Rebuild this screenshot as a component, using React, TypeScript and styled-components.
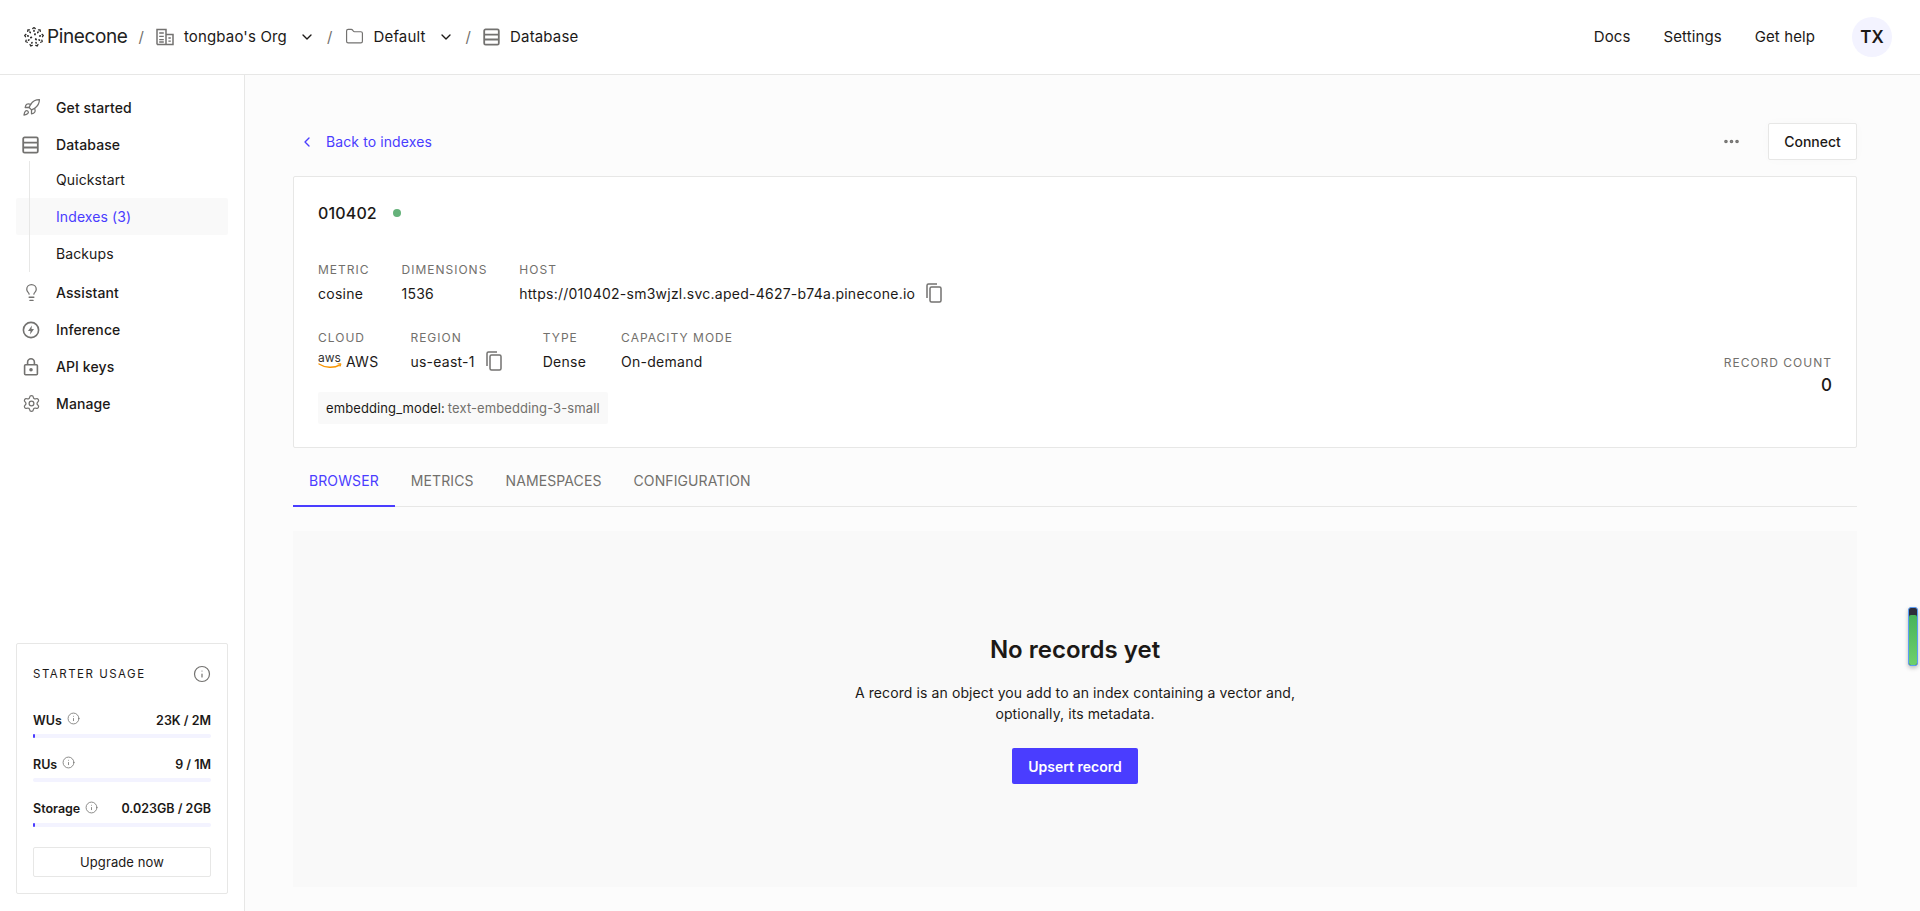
import React from 'react'
import styled, { createGlobalStyle } from 'styled-components'
import { ChevronDown, ChevronLeft, Ellipsis, Folder, Info, Lightbulb, Rocket, Settings } from 'lucide-react'

const palette = {
	text: '#1c1917',
	label: '#72706c',
	icon: '#737270',
	accent: '#4a3dff',
	border: '#e7e7e6',
	page: '#fcfcfc',
	soft: '#f9f9f9',
	track: '#f3f3ff',
}

const GlobalStyle = createGlobalStyle`
	html, body {
		margin: 0;
		height: 100%;
		background: ${palette.page};
		font-family: Inter, 'Liberation Sans', sans-serif;
		color: ${palette.text};
		overflow: hidden;
	}
	* { box-sizing: border-box; }
`

const RowsIcon = () => (
	<svg width="17" height="18" viewBox="0 0 17 18" fill="none" stroke="currentColor" strokeWidth="1.8">
		<rect x="1.2" y="1.4" width="14.6" height="15.2" rx="1.4" />
		<path d="M1.2 6.7h14.6M1.2 11.5h14.6" />
	</svg>
)

const OrgIcon = () => (
	<svg width="18" height="18" viewBox="0 0 18 18" fill="none" stroke="currentColor" strokeWidth="1.5">
		<path d="M1 16.4V1.6h9v14.8M10 6.6h7v9.8H1" />
		<path d="M3.2 5h4.6M3.2 8.4h4.6M3.2 11.6h4.6M3.2 14h4.6M12.4 10h2.4M12.4 13.2h2.4" strokeWidth="1.3" />
	</svg>
)

const CopyIcon = () => (
	<svg width="18" height="20" viewBox="0 0 18 20" fill="none" stroke="currentColor" strokeWidth="1.5">
		<path d="M2 15V2.5C2 1.7 2.5 1 3.5 1H12" />
		<rect x="5" y="4" width="11" height="15" rx="1.5" />
	</svg>
)

const BoltIcon = () => (
	<svg width="18" height="18" viewBox="0 0 18 18" fill="none">
		<circle cx="9" cy="9" r="7.6" stroke="currentColor" strokeWidth="1.6" />
		<path d="M9.9 4.4 6 9.9h2.5l-.4 3.7 3.9-5.5H9.5z" fill="currentColor" />
	</svg>
)

const LockIcon = () => (
	<svg width="18" height="18" viewBox="0 0 18 18" fill="none" stroke="currentColor" strokeWidth="1.6">
		<rect x="2.6" y="6.8" width="12.8" height="10" rx="1" />
		<path d="M5.6 6.8V4.2a3.4 3.4 0 0 1 6.8 0v2.6" />
		<circle cx="9" cy="11.8" r="1" fill="currentColor" />
	</svg>
)

const logoOuter = [0, 40, 80, 120, 160, 200, 240, 280, 320]
const logoInner = [20, 140, 260]

const LogoMark = () => (
	<svg width="20" height="20" viewBox="-10 -10 20 20" fill="none" stroke="#2b2a28" strokeLinecap="round">
		{logoOuter.map((deg) => (
			<g key={deg} transform={`rotate(${deg})`}>
				<path d="M-1.2 -8.4 0 -9.4 1.2 -8.4" strokeWidth="1.3" />
				<path d="M0 -6.4v.6" strokeWidth="1.6" />
			</g>
		))}
		{logoInner.map((deg) => (
			<path key={deg} d="M0 -3.2v.5" strokeWidth="1.8" transform={`rotate(${deg})`} />
		))}
	</svg>
)

const AwsIcon = () => (
	<AwsWrap>
		<AwsText>aws</AwsText>
		<svg width="24" height="6" viewBox="0 0 24 6" fill="none">
			<path d="M1 1c6 4 15 4.4 21 .8" stroke="#f79400" strokeWidth="1.4" strokeLinecap="round" />
			<path d="M19.5 .8 23 .8 22 3.6" stroke="#f79400" strokeWidth="1" />
		</svg>
	</AwsWrap>
)

const usage = [
	{ name: 'WUs', value: '23K / 2M', fill: 1 },
	{ name: 'RUs', value: '9 / 1M', fill: 0 },
	{ name: 'Storage', value: '0.023GB / 2GB', fill: 1 },
]

const App = () => {
	return (
		<Page>
			<GlobalStyle />
			<Header>
				<Crumbs>
					<Logo>
						<LogoMark />
						<LogoName>Pinecone</LogoName>
					</Logo>
					<Slash>/</Slash>
					<Crumb>
						<CrumbIcon>
							<OrgIcon />
						</CrumbIcon>
						tongbao's Org
						<CrumbChevron>
							<ChevronDown size={16} strokeWidth={2} />
						</CrumbChevron>
					</Crumb>
					<Slash>/</Slash>
					<Crumb>
						<CrumbIcon>
							<Folder size={19} strokeWidth={1.5} />
						</CrumbIcon>
						Default
						<CrumbChevron>
							<ChevronDown size={16} strokeWidth={2} />
						</CrumbChevron>
					</Crumb>
					<Slash>/</Slash>
					<Crumb>
						<CrumbIcon>
							<RowsIcon />
						</CrumbIcon>
						Database
					</Crumb>
				</Crumbs>
				<TopNav>
					<TopLink>Docs</TopLink>
					<TopLink>Settings</TopLink>
					<TopLink>Get help</TopLink>
					<Avatar>TX</Avatar>
				</TopNav>
			</Header>
			<Body>
				<Sidebar>
					<Nav>
						<NavItem>
							<NavIcon>
								<Rocket size={19} strokeWidth={1.6} />
							</NavIcon>
							Get started
						</NavItem>
						<NavItem>
							<NavIcon>
								<RowsIcon />
							</NavIcon>
							Database
						</NavItem>
						<SubNav>
							<SubItem>Quickstart</SubItem>
							<SubItem $active>Indexes (3)</SubItem>
							<SubItem>Backups</SubItem>
						</SubNav>
						<NavItem>
							<NavIcon>
								<Lightbulb size={19} strokeWidth={1.6} />
							</NavIcon>
							Assistant
						</NavItem>
						<NavItem>
							<NavIcon>
								<BoltIcon />
							</NavIcon>
							Inference
						</NavItem>
						<NavItem>
							<NavIcon>
								<LockIcon />
							</NavIcon>
							API keys
						</NavItem>
						<NavItem>
							<NavIcon>
								<Settings size={19} strokeWidth={1.6} />
							</NavIcon>
							Manage
						</NavItem>
					</Nav>
					<UsageCard>
						<UsageHead>
							<UsageTitle>STARTER USAGE</UsageTitle>
							<Info size={18} strokeWidth={1.6} color={palette.icon} />
						</UsageHead>
						{usage.map((item) => (
							<UsageRow key={item.name}>
								<UsageLine>
									<UsageName>
										{item.name}
										<Info size={13} strokeWidth={1.5} color={palette.icon} />
									</UsageName>
									<span>{item.value}</span>
								</UsageLine>
								<Track>
									<Fill style={{ width: `${item.fill * 2}px` }} />
								</Track>
							</UsageRow>
						))}
						<UpgradeButton>Upgrade now</UpgradeButton>
					</UsageCard>
				</Sidebar>
				<Main>
					<TopRow>
						<BackLink>
							<ChevronLeft size={16} strokeWidth={2} />
							Back to indexes
						</BackLink>
						<Actions>
							<Ellipsis size={19} strokeWidth={2.6} color={palette.icon} />
							<ConnectButton>Connect</ConnectButton>
						</Actions>
					</TopRow>
					<IndexCard>
						<IndexInfo>
							<IndexTitle>
								010402
								<StatusDot />
							</IndexTitle>
							<FieldRow $top={38}>
								<Field>
									<FieldLabel>METRIC</FieldLabel>
									<FieldValue>cosine</FieldValue>
								</Field>
								<Field>
									<FieldLabel>DIMENSIONS</FieldLabel>
									<FieldValue>1536</FieldValue>
								</Field>
								<Field>
									<FieldLabel>HOST</FieldLabel>
									<FieldValue>
										https://010402-sm3wjzl.svc.aped-4627-b74a.pinecone.io
										<CopyWrap>
											<CopyIcon />
										</CopyWrap>
									</FieldValue>
								</Field>
							</FieldRow>
							<FieldRow $top={27}>
								<Field>
									<FieldLabel>CLOUD</FieldLabel>
									<FieldValue>
										<AwsIcon />
										AWS
									</FieldValue>
								</Field>
								<Field $trail={8}>
									<FieldLabel>REGION</FieldLabel>
									<FieldValue>
										us-east-1
										<CopyWrap>
											<CopyIcon />
										</CopyWrap>
									</FieldValue>
								</Field>
								<Field $trail={3}>
									<FieldLabel>TYPE</FieldLabel>
									<FieldValue>Dense</FieldValue>
								</Field>
								<Field>
									<FieldLabel>CAPACITY MODE</FieldLabel>
									<FieldValue>On-demand</FieldValue>
								</Field>
							</FieldRow>
							<Chip>
								embedding_model: <ChipValue>text-embedding-3-small</ChipValue>
							</Chip>
						</IndexInfo>
						<RecordCount>
							<FieldLabel>RECORD COUNT</FieldLabel>
							<CountValue>0</CountValue>
						</RecordCount>
					</IndexCard>
					<Tabs>
						<Tab $active>BROWSER</Tab>
						<Tab>METRICS</Tab>
						<Tab>NAMESPACES</Tab>
						<Tab>CONFIGURATION</Tab>
					</Tabs>
					<EmptyPanel>
						<EmptyTitle>No records yet</EmptyTitle>
						<EmptyText>A record is an object you add to an index containing a vector and, optionally, its metadata.</EmptyText>
						<PrimaryButton>Upsert record</PrimaryButton>
					</EmptyPanel>
				</Main>
			</Body>
			<SideWidget>
				<SideWidgetFill />
			</SideWidget>
		</Page>
	)
}

const Page = styled.div`
	width: 1920px;
	height: 911px;
	display: flex;
	flex-direction: column;
	position: relative;
`
const Header = styled.header`
	height: 75px;
	flex: none;
	display: flex;
	align-items: center;
	justify-content: space-between;
	padding: 0 28px 1px 24px;
	background: #fff;
	border-bottom: 1px solid ${palette.border};
`
const Crumbs = styled.div`
	display: flex;
	align-items: center;
	font-size: 15px;
	letter-spacing: 0.15px;
`
const Logo = styled.div`
	display: flex;
	align-items: center;
	gap: 3px;
`
const LogoName = styled.span`
	font-size: 19px;
	letter-spacing: -0.4px;
	color: #222;
`
const Slash = styled.span`
	margin: 0 12px 0 11px;
	color: ${palette.label};
	font-size: 15px;
`
const Crumb = styled.div`
	display: flex;
	align-items: center;
	gap: 10px;
`
const CrumbIcon = styled.span`
	display: flex;
	color: ${palette.icon};
`
const CrumbChevron = styled.span`
	display: flex;
	margin: 0 1px 0 2px;
`
const TopNav = styled.nav`
	display: flex;
	align-items: center;
	gap: 33px;
	font-size: 15px;
	letter-spacing: 0.1px;
`
const TopLink = styled.span``
const Avatar = styled.div`
	width: 40px;
	height: 40px;
	border-radius: 100%;
	background: ${palette.track};
	display: flex;
	align-items: center;
	justify-content: center;
	font-size: 17px;
	font-weight: 600;
	margin-left: 4px;
`
const Body = styled.div`
	flex: 1;
	display: flex;
	min-height: 0;
`
const Sidebar = styled.aside`
	width: 245px;
	flex: none;
	background: #fff;
	border-right: 1px solid ${palette.border};
	display: flex;
	flex-direction: column;
	justify-content: space-between;
	padding: 14px 16px 17px;
`
const Nav = styled.nav`
	display: flex;
	flex-direction: column;
`
const NavItem = styled.div`
	height: 37px;
	display: flex;
	align-items: center;
	gap: 15px;
	padding-left: 6px;
	font-size: 14px;
	font-weight: 500;
	letter-spacing: 0.1px;
`
const NavIcon = styled.span`
	display: flex;
	width: 19px;
	justify-content: flex-start;
	color: ${palette.icon};
`
const SubNav = styled.div`
	position: relative;
	margin: -2px 0 2px;
	display: flex;
	flex-direction: column;
	&::before {
		content: '';
		position: absolute;
		left: 13px;
		top: 0;
		bottom: 0;
		width: 1px;
		background: ${palette.border};
	}
`
const SubItem = styled.div<{ $active?: boolean }>`
	height: 37px;
	display: flex;
	align-items: center;
	padding-left: 40px;
	font-size: 14px;
	letter-spacing: 0.1px;
	border-radius: 2px;
	color: ${({ $active }) => ($active ? palette.accent : palette.text)};
	background: ${({ $active }) => ($active ? palette.soft : 'transparent')};
`
const UsageCard = styled.section`
	height: 251px;
	border: 1px solid ${palette.border};
	border-radius: 2px;
	padding: 21px 16px 16px;
	display: flex;
	flex-direction: column;
`
const UsageHead = styled.div`
	display: flex;
	align-items: center;
	justify-content: space-between;
	margin-bottom: 28px;
`
const UsageTitle = styled.span`
	font-size: 11.5px;
	letter-spacing: 1.5px;
`
const UsageRow = styled.div`
	height: 45px;
	display: flex;
	flex-direction: column;
`
const UsageLine = styled.div`
	display: flex;
	align-items: center;
	justify-content: space-between;
	height: 18px;
	font-size: 12.5px;
	font-weight: 600;
`
const UsageName = styled.span`
	display: flex;
	align-items: center;
	gap: 5px;
	& > svg {
		margin-top: -3px;
	}
`
const Track = styled.div`
	height: 4px;
	margin-top: 5px;
	border-radius: 2px;
	background: ${palette.track};
`
const Fill = styled.div`
	height: 4px;
	border-radius: 2px;
	background: ${palette.accent};
`
const UpgradeButton = styled.button`
	height: 30px;
	margin-top: 3px;
	background: #fff;
	border: 1px solid ${palette.border};
	border-radius: 2px;
	font: inherit;
	font-size: 13px;
	letter-spacing: 0.1px;
	color: ${palette.text};
`
const Main = styled.main`
	flex: 1;
	min-width: 0;
	padding: 48px 63px 0 48px;
	display: flex;
	flex-direction: column;
`
const TopRow = styled.div`
	height: 37px;
	margin-bottom: 16px;
	display: flex;
	align-items: center;
	justify-content: space-between;
`
const BackLink = styled.div`
	display: flex;
	align-items: center;
	gap: 11px;
	padding-left: 6px;
	font-size: 14px;
	letter-spacing: 0.1px;
	color: ${palette.accent};
`
const Actions = styled.div`
	display: flex;
	align-items: center;
	gap: 27px;
`
const ConnectButton = styled.button`
	width: 89px;
	height: 37px;
	background: #fff;
	border: 1px solid ${palette.border};
	border-radius: 2px;
	font: inherit;
	font-size: 14px;
	font-weight: 500;
	color: ${palette.text};
	box-shadow: 0 0 12px rgba(0, 0, 0, 0.02);
`
const IndexCard = styled.section`
	height: 272px;
	flex: none;
	background: #fff;
	border: 1px solid ${palette.border};
	border-radius: 2px;
	padding: 24px 24px 23px;
	display: flex;
	justify-content: space-between;
	align-items: flex-end;
`
const IndexInfo = styled.div`
	align-self: stretch;
	display: flex;
	flex-direction: column;
	align-items: flex-start;
`
const IndexTitle = styled.div`
	display: flex;
	align-items: center;
	gap: 16px;
	height: 24px;
	font-size: 16px;
	font-weight: 500;
	letter-spacing: 0.15px;
`
const StatusDot = styled.span`
	width: 8px;
	height: 8px;
	border-radius: 100%;
	background: #65b27a;
`
const FieldRow = styled.div<{ $top: number }>`
	display: flex;
	gap: 32px;
	margin-top: ${({ $top }) => $top}px;
`
const Field = styled.div<{ $trail?: number }>`
	display: flex;
	flex-direction: column;
	gap: 5px;
	padding-right: ${({ $trail }) => $trail ?? 0}px;
`
const FieldLabel = styled.span`
	font-size: 12px;
	line-height: 14px;
	letter-spacing: 1px;
	color: ${palette.label};
`
const FieldValue = styled.span`
	display: flex;
	align-items: center;
	height: 22px;
	font-size: 14px;
	letter-spacing: 0.25px;
	white-space: nowrap;
`
const CopyWrap = styled.span`
	display: flex;
	margin-left: 10px;
	color: ${palette.icon};
`
const AwsWrap = styled.span`
	display: flex;
	flex-direction: column;
	align-items: flex-start;
	margin-right: 4px;
	line-height: 1;
`
const AwsText = styled.span`
	font-size: 12px;
	line-height: 10px;
	letter-spacing: 0;
	color: #333;
`
const Chip = styled.div`
	margin-top: auto;
	height: 32px;
	padding: 0 8px;
	display: flex;
	align-items: center;
	gap: 3px;
	background: ${palette.soft};
	border-radius: 2px;
	font-size: 13px;
	letter-spacing: 0.1px;
`
const ChipValue = styled.span`
	color: ${palette.label};
`
const RecordCount = styled.div`
	display: flex;
	flex-direction: column;
	align-items: flex-end;
	gap: 3px;
	margin-bottom: 27px;
`
const CountValue = styled.span`
	font-size: 17px;
	font-weight: 500;
	line-height: 24px;
`
const Tabs = styled.div`
	height: 59px;
	flex: none;
	margin-bottom: 24px;
	display: flex;
	border-bottom: 1px solid ${palette.border};
`
const Tab = styled.div<{ $active?: boolean }>`
	height: 59px;
	padding: 8px 16px 0;
	display: flex;
	align-items: center;
	font-size: 14px;
	letter-spacing: 0.1px;
	color: ${({ $active }) => ($active ? palette.accent : palette.label)};
	border-bottom: 2px solid ${({ $active }) => ($active ? palette.accent : 'transparent')};
`
const EmptyPanel = styled.section`
	height: 356px;
	flex: none;
	background: ${palette.soft};
	display: flex;
	flex-direction: column;
	align-items: center;
	justify-content: center;
`
const EmptyTitle = styled.h2`
	margin: 0 0 16px;
	font-size: 24px;
	line-height: 32px;
	font-weight: 600;
`
const EmptyText = styled.p`
	margin: 0 0 24px;
	width: 460px;
	text-align: center;
	font-size: 14px;
	line-height: 21px;
	letter-spacing: 0.1px;
`
const PrimaryButton = styled.button`
	width: 126px;
	height: 36px;
	background: ${palette.accent};
	color: #fff;
	border: 0;
	border-radius: 2px;
	font: inherit;
	font-size: 14px;
	font-weight: 600;
`
const SideWidget = styled.div`
	position: absolute;
	left: 1908px;
	top: 607px;
	width: 10px;
	height: 59px;
	border-radius: 3px;
	background: #2e2d3a;
	border: 1px solid #5a9df5;
	box-shadow: 0 2px 4px rgba(0, 0, 0, 0.25);
	display: flex;
	align-items: flex-end;
`
const SideWidgetFill = styled.div`
	width: 100%;
	height: 50px;
	border-radius: 2px;
	background: linear-gradient(#47b35a, #6fd06b);
`

export default App
